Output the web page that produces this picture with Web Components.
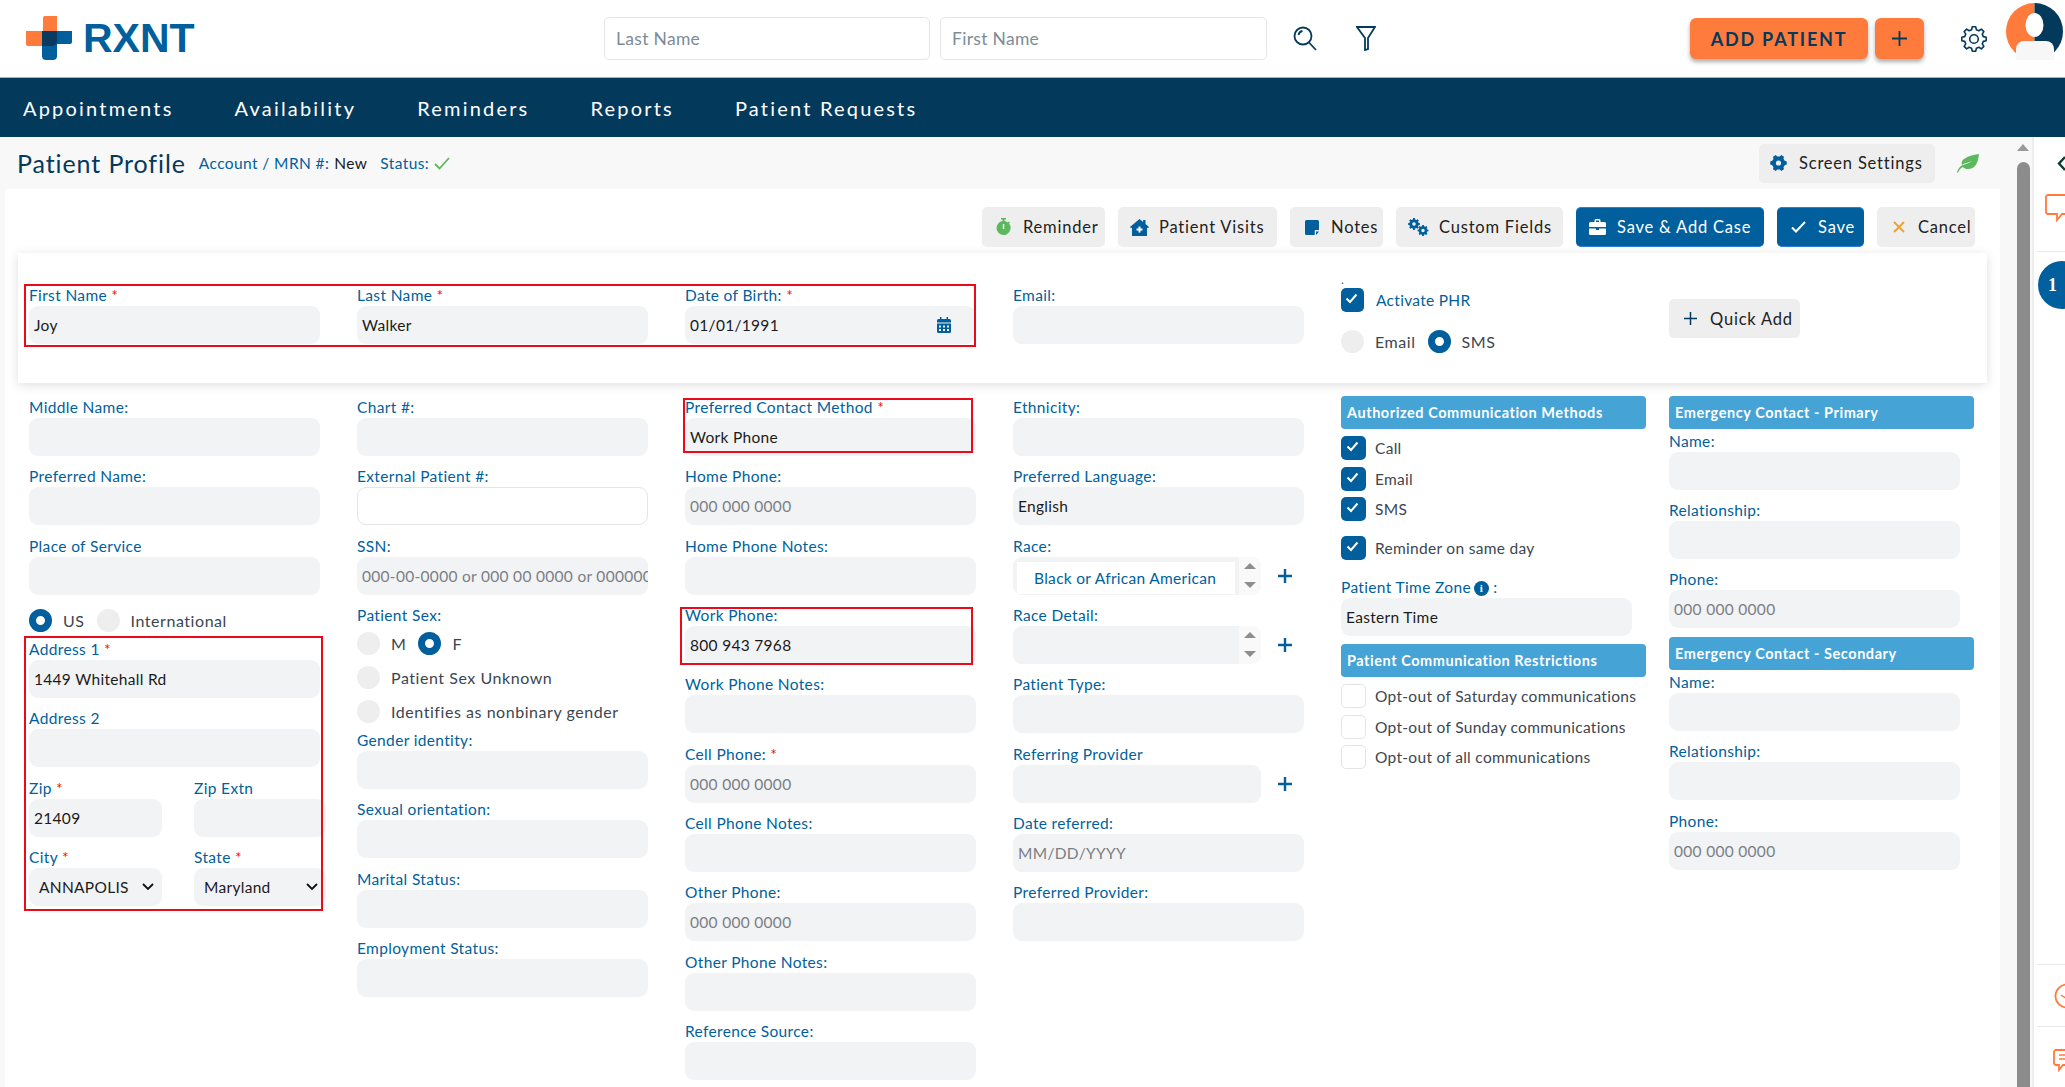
<!DOCTYPE html>
<html lang="en">
<head>
<meta charset="utf-8">
<title>Patient Profile</title>
<style>
  html, body { margin: 0; height: 100%; overflow: hidden; background: #fff; }
  body { font-family: Lato, "Open Sans", sans-serif; font-size: 15.5px; letter-spacing: .35px; }
  .frame { display: flex; flex-direction: column; height: 1087px; }
  .work { display: flex; flex: 1; min-height: 0; }
  .col { display: flex; flex-direction: column; }
  .pt { padding-top: 1px; }
  .two { display: flex; gap: 32px; }
  .radios { display: flex; align-items: center; gap: 12px; height: 23px; }
</style>
</head>
<body>
<div class="frame">
  <rx-header></rx-header>
  <rx-nav>
    <a>Appointments</a><a>Availability</a><a>Reminders</a><a>Reports</a><a>Patient Requests</a>
  </rx-nav>
  <div class="work">
    <rx-main>
      <rx-subbar slot="top"></rx-subbar>
      <rx-btn slot="tools" w="123" icon="watch">Reminder</rx-btn>
      <rx-btn slot="tools" w="159" icon="house">Patient Visits</rx-btn>
      <rx-btn slot="tools" w="93" icon="note">Notes</rx-btn>
      <rx-btn slot="tools" w="167" icon="cogs">Custom Fields</rx-btn>
      <rx-btn slot="tools" w="188" icon="case" primary>Save &amp; Add Case</rx-btn>
      <rx-btn slot="tools" w="87" icon="check" primary>Save</rx-btn>
      <rx-btn slot="tools" w="98" icon="x">Cancel</rx-btn>

      <rx-field slot="card" label="First Name" req>Joy</rx-field>
      <rx-field slot="card" label="Last Name" req>Walker</rx-field>
      <rx-field slot="card" label="Date of Birth:" req>01/01/1991<rx-icon slot="end" name="cal"></rx-icon></rx-field>
      <rx-field slot="card" label="Email:"></rx-field>
      <div slot="card" class="col" style="margin-top:-10px">
        <div style="height:13px;line-height:9px;color:#005f9c;font-size:12px">.</div>
        <rx-check checked accent>Activate PHR</rx-check>
        <div class="radios" style="margin-top:18px">
          <rx-radio>Email</rx-radio><rx-radio checked>SMS</rx-radio>
        </div>
      </div>
      <div slot="card" style="padding-top:14px"><rx-btn w="131" icon="plus" tall>Quick Add</rx-btn></div>

      <div slot="form" class="col pt">
        <rx-field label="Middle Name:"></rx-field>
        <rx-field label="Preferred Name:"></rx-field>
        <rx-field label="Place of Service"></rx-field>
        <div class="radios" style="margin:4px 0 7px">
          <rx-radio checked>US</rx-radio><rx-radio>International</rx-radio>
        </div>
        <rx-field label="Address 1" req>1449 Whitehall Rd</rx-field>
        <rx-field label="Address 2"></rx-field>
        <div class="two">
          <rx-field label="Zip" req w="133">21409</rx-field>
          <rx-field label="Zip Extn" w="132"></rx-field>
        </div>
        <div class="two">
          <rx-field label="City" req w="133" select>ANNAPOLIS</rx-field>
          <rx-field label="State" req w="132" select>Maryland</rx-field>
        </div>
      </div>

      <div slot="form" class="col pt">
        <rx-field label="Chart #:"></rx-field>
        <rx-field label="External Patient #:" white></rx-field>
        <rx-field label="SSN:" ph>000-00-0000 or 000 00 0000 or 000000</rx-field>
        <rx-field label="Patient Sex:" bare></rx-field>
        <div class="radios" style="margin-top:6px">
          <rx-radio>M</rx-radio><rx-radio checked>F</rx-radio>
        </div>
        <rx-radio style="margin-top:11px">Patient Sex Unknown</rx-radio>
        <rx-radio style="margin-top:11px">Identifies as nonbinary gender</rx-radio>
        <rx-field label="Gender identity:" style="margin-top:7px"></rx-field>
        <rx-field label="Sexual orientation:"></rx-field>
        <rx-field label="Marital Status:"></rx-field>
        <rx-field label="Employment Status:"></rx-field>
      </div>

      <div slot="form" class="col pt">
        <rx-field label="Preferred Contact Method" req>Work Phone</rx-field>
        <rx-field label="Home Phone:" ph>000 000 0000</rx-field>
        <rx-field label="Home Phone Notes:"></rx-field>
        <rx-field label="Work Phone:">800 943 7968</rx-field>
        <rx-field label="Work Phone Notes:"></rx-field>
        <rx-field label="Cell Phone:" req ph>000 000 0000</rx-field>
        <rx-field label="Cell Phone Notes:"></rx-field>
        <rx-field label="Other Phone:" ph>000 000 0000</rx-field>
        <rx-field label="Other Phone Notes:"></rx-field>
        <rx-field label="Reference Source:"></rx-field>
      </div>

      <div slot="form" class="col pt">
        <rx-field label="Ethnicity:"></rx-field>
        <rx-field label="Preferred Language:">English</rx-field>
        <rx-field label="Race:" w="248" list="Black or African American"><rx-icon slot="after" name="add"></rx-icon></rx-field>
        <rx-field label="Race Detail:" w="248" list=""><rx-icon slot="after" name="add"></rx-icon></rx-field>
        <rx-field label="Patient Type:"></rx-field>
        <rx-field label="Referring Provider" w="248"><rx-icon slot="after" name="add"></rx-icon></rx-field>
        <rx-field label="Date referred:" ph>MM/DD/YYYY</rx-field>
        <rx-field label="Preferred Provider:"></rx-field>
      </div>

      <div slot="form" class="col">
        <rx-head>Authorized Communication Methods</rx-head>
        <rx-check checked style="margin-top:7px">Call</rx-check>
        <rx-check checked style="margin-top:6.5px">Email</rx-check>
        <rx-check checked style="margin-top:6.5px">SMS</rx-check>
        <rx-check checked style="margin-top:15px">Reminder on same day</rx-check>
        <rx-field label="Patient Time Zone" info style="margin-top:17px">Eastern Time</rx-field>
        <rx-head style="margin-top:-2px">Patient Communication Restrictions</rx-head>
        <rx-check style="margin-top:7px">Opt-out of Saturday communications</rx-check>
        <rx-check style="margin-top:6.5px">Opt-out of Sunday communications</rx-check>
        <rx-check style="margin-top:6.5px">Opt-out of all communications</rx-check>
      </div>

      <div slot="form" class="col">
        <rx-head>Emergency Contact - Primary</rx-head>
        <rx-field label="Name:" style="margin-top:1.5px"></rx-field>
        <rx-field label="Relationship:"></rx-field>
        <rx-field label="Phone:" ph>000 000 0000</rx-field>
        <rx-head style="margin-top:-1.5px">Emergency Contact - Secondary</rx-head>
        <rx-field label="Name:" style="margin-top:2px"></rx-field>
        <rx-field label="Relationship:"></rx-field>
        <rx-field label="Phone:" ph>000 000 0000</rx-field>
      </div>

      <rx-mark slot="marks" style="left:24px;top:284px;width:952px;height:63px"></rx-mark>
      <rx-mark slot="marks" style="left:683px;top:398px;width:290px;height:55px"></rx-mark>
      <rx-mark slot="marks" style="left:680px;top:607px;width:293px;height:58px"></rx-mark>
      <rx-mark slot="marks" style="left:24px;top:636px;width:299px;height:275px"></rx-mark>
    </rx-main>
    <rx-scrollbar></rx-scrollbar>
    <rx-side></rx-side>
  </div>
</div>

<script>
const BLUE = '#005f9c';
const NAVY = '#033a5c';

// outline gear, built from the tooth count so it stays even
function gearPath(cx, cy, r1, r2, teeth) {
  let d = '';
  const step = Math.PI * 2 / teeth;
  for (let i = 0; i < teeth; i++) {
    const a = i * step;
    const pts = [[r1, a - step * .32], [r2, a - step * .18], [r2, a + step * .18], [r1, a + step * .32]];
    pts.forEach((p, n) => {
      const x = (cx + p[0] * Math.cos(p[1])).toFixed(2);
      const y = (cy + p[0] * Math.sin(p[1])).toFixed(2);
      d += (i === 0 && n === 0 ? 'M' : 'L') + x + ' ' + y + ' ';
    });
  }
  return d + 'Z';
}

const ICONS = {
  watch: `<svg width="15" height="18" viewBox="0 0 15 18"><path d="M5 0h5v1.6H8.5v1.5a7 7 0 0 1 3.4 1.4l1-1 1.1 1.1-1 1A7 7 0 1 1 6.5 3.1V1.6H5z" fill="#5cb85c"/><rect x="6.8" y="6" width="1.4" height="5" fill="#fff"/></svg>`,
  house: `<svg width="19" height="17" viewBox="0 0 19 17"><path d="M9.5 0l3.6 3V1h2.4v4l3.5 3-1 1.2-1-.8V17H2V8.400l-1 .8L0 8z" fill="${BLUE}"/><path d="M8.500 7.500h2v2h2v2h-2v2h-2v-2h-2v-2h2z" fill="#fff"/></svg>`,
  note: `<svg width="14" height="15" viewBox="0 0 14 15"><path d="M1.500 0h11A1.500 1.500 0 0 1 14 1.500V10h-3.500A.8.8 0 0 0 9.700 10.800V15H1.500A1.500 1.500 0 0 1 0 13.500v-12A1.500 1.500 0 0 1 1.500 0zM11 11.500h3L11 15z" fill="${BLUE}"/></svg>`,
  cogs: `<svg width="21" height="18" viewBox="0 0 21 18"><path d="${gearPath(6, 6, 4.6, 6, 8)}" fill="${BLUE}"/><circle cx="6" cy="6" r="1.800" fill="#eee"/><path d="${gearPath(15, 12.5, 4.300, 5.500, 8)}" fill="${BLUE}"/><circle cx="15" cy="12.500" r="1.700" fill="#eee"/></svg>`,
  case: `<svg width="17" height="16" viewBox="0 0 17 16"><path d="M5.500 3V1.500A1.500 1.500 0 0 1 7 0h3a1.500 1.500 0 0 1 1.500 1.500V3h4A1.500 1.500 0 0 1 17 4.500V8H0V4.500A1.500 1.500 0 0 1 1.500 3zM7 1.500V3h3V1.500z" fill="#fff"/><path d="M0 9.500h7V11h3V9.500h7v5A1.500 1.500 0 0 1 15.500 16h-14A1.500 1.500 0 0 1 0 14.500z" fill="#fff"/></svg>`,
  check: `<svg width="15" height="12" viewBox="0 0 15 12"><path d="M1 6.500l4 4L14 1" fill="none" stroke="#fff" stroke-width="2"/></svg>`,
  x: `<svg width="12" height="12" viewBox="0 0 12 12"><path d="M1 1l10 10M11 1L1 11" stroke="#f0a030" stroke-width="1.800"/></svg>`,
  plus: `<svg width="13" height="13" viewBox="0 0 13 13"><path d="M6.500 0v13M0 6.500h13" stroke="${NAVY}" stroke-width="1.500"/></svg>`,
  add: `<svg width="16" height="16" viewBox="0 0 16 16"><path d="M8 1v14M1 8h14" stroke="${BLUE}" stroke-width="2.400"/></svg>`,
  cal: `<svg width="14" height="16" viewBox="0 0 14 16"><path d="M3 0h1.500v2h5V0H11v2h1.500A1.500 1.500 0 0 1 14 3.500V5.500H0v-2A1.500 1.500 0 0 1 1.500 2H3z" fill="${BLUE}"/><path d="M0 6.500h14v8a1.500 1.500 0 0 1-1.500 1.500h-11A1.500 1.500 0 0 1 0 14.500z" fill="${BLUE}"/><path d="M2 8.500h2v2H2zM6 8.500h2v2H6zM10 8.500h2v2h-2zM2 12h2v2H2zM6 12h2v2H6zM10 12h2v2h-2z" fill="#f2f3f5"/></svg>`
};

class RxIcon extends HTMLElement {
  connectedCallback() {
    this.attachShadow({ mode: 'open' });
    this.shadowRoot.innerHTML = `<style>:host{display:inline-flex;align-items:center;justify-content:center}</style>${ICONS[this.getAttribute('name')] || ''}`;
  }
}

class RxHeader extends HTMLElement {
  connectedCallback() {
    this.attachShadow({ mode: 'open' });
    this.shadowRoot.innerHTML = `
      <style>
        :host { display: flex; align-items: center; height: 77px; background: #fff; border-bottom: 1px solid #9fb2bf; padding-left: 26px; box-sizing: content-box; font-family: Lato, sans-serif; }
        .logo { display: flex; align-items: center; width: 578px; }
        .word { font: bold 41px/1 "Liberation Sans", sans-serif; color: ${BLUE}; margin-left: 11px; letter-spacing: 0; }
        .q { box-sizing: border-box; height: 43px; border: 1px solid #e3e6e8; border-radius: 5px; padding: 0 11px; display: flex; align-items: center; font-size: 17.5px; color: #7d8c98; letter-spacing: .3px; }
        .add, .more { height: 41px; background: #ff7b3c; color: ${NAVY}; border-radius: 6px; box-shadow: 0 3px 4px rgba(0,0,0,.32); display: flex; align-items: center; justify-content: center; }
        .add { width: 178px; font-size: 18px; font-weight: 700; letter-spacing: 1.800px; margin-left: 314px; }
        .more { width: 49px; margin-left: 7px; }
      </style>
      <div class="logo">
        <svg width="46" height="46" viewBox="0 0 46 46">
          <path d="M17 2a2 2 0 0 1 2-2h12v30H2a2 2 0 0 1-2-2V15h17z" transform="translate(0 0)" fill="#ff7b3c"/>
          <path d="M16 17h30v11a2 2 0 0 1-2 2H31v12a4 4 0 0 1-4 4H20a4 4 0 0 1-4-4z" transform="translate(0 -2)" fill="${BLUE}"/>
          <path d="M16 15h15v10a5 5 0 0 1-5 5H16z" fill="#0a3a60"/>
        </svg>
        <span class="word">RXNT</span>
      </div>
      <div class="q" style="width:326px">Last Name</div>
      <div class="q" style="width:327px;margin-left:10px">First Name</div>
      <svg style="margin-left:26px" width="24" height="25" viewBox="0 0 24 25" fill="none" stroke="${NAVY}" stroke-width="1.800"><circle cx="10" cy="10" r="8.500"/><path d="M16 16.500l7 7.500M5.500 9a5 5 0 0 1 4-4"/></svg>
      <svg style="margin-left:39px" width="20" height="25" viewBox="0 0 20 25" fill="none" stroke="${NAVY}" stroke-width="1.800"><path d="M1 1h18l-7 11v11l-3 1V12z"/></svg>
      <div class="add">ADD PATIENT</div>
      <div class="more"><svg width="15" height="15" viewBox="0 0 15 15"><path d="M7.500 0v15M0 7.500h15" stroke="${NAVY}" stroke-width="1.800"/></svg></div>
      <svg style="margin-left:37px" width="26" height="26" viewBox="0 0 26 26" fill="none" stroke="${NAVY}" stroke-width="1.600"><path d="${gearPath(13, 13, 9.600, 12.300, 8)}" stroke-linejoin="round"/><circle cx="13" cy="13" r="4.300"/></svg>
      <svg style="margin-left:19px;margin-top:-14px" width="57" height="57" viewBox="0 0 57 57">
        <path d="M28.500 0a28.500 28.500 0 0 0 0 57z" fill="#ff7b3c"/>
        <path d="M28.500 0a28.500 28.500 0 0 1 0 57z" fill="${NAVY}"/>
        <ellipse cx="28.500" cy="22" rx="9" ry="12" fill="#fff"/>
        <path d="M10 57V46a8 8 0 0 1 8-8h22a8 8 0 0 1 8 8v11z" fill="#f7f7f7"/>
      </svg>`;
  }
}

class RxNav extends HTMLElement {
  connectedCallback() {
    this.attachShadow({ mode: 'open' });
    this.shadowRoot.innerHTML = `
      <style>
        :host { display: flex; align-items: center; gap: 61px; height: 59px; padding-left: 23px; background: ${NAVY}; color: #fff; font: 20px Lato, sans-serif; letter-spacing: 2.200px; }
        ::slotted(a) { color: #fff; }
      </style>
      <slot></slot>`;
  }
}

class RxSubbar extends HTMLElement {
  connectedCallback() {
    this.attachShadow({ mode: 'open' });
    this.shadowRoot.innerHTML = `
      <style>
        :host { display: flex; align-items: center; height: 52px; padding: 0 36px 0 17px; margin-left: -5px; background: #f8f8f8; font-family: Lato, sans-serif; }
        h1 { margin: 0 13px 0 0; font-size: 25px; font-weight: 400; letter-spacing: .9px; color: ${NAVY}; }
        .i { color: ${BLUE}; font-size: 15.500px; letter-spacing: .4px; }
        .v { color: #1b1b1b; margin: 0 13px 0 5px; font-size: 15.500px; letter-spacing: .4px; }
        .sp { flex: 1; }
        .set { box-sizing: border-box; width: 176px; height: 39px; background: #eee; border-radius: 5px; display: flex; align-items: center; gap: 12px; padding-left: 11px; color: #222; font-size: 16.500px; letter-spacing: .8px; }
      </style>
      <h1>Patient Profile</h1>
      <span class="i">Account / MRN #:</span><span class="v">New</span>
      <span class="i">Status:</span>
      <svg style="margin-left:5px" width="16" height="13" viewBox="0 0 16 13"><path d="M1 7l4.500 4.500L15 1" fill="none" stroke="#5cb85c" stroke-width="1.800"/></svg>
      <div class="sp"></div>
      <div class="set"><svg width="17" height="18" viewBox="0 0 17 18"><path d="${gearPath(8.500, 9, 6.600, 8.400, 6)}" fill="${BLUE}"/><circle cx="8.500" cy="9" r="2.600" fill="#eee"/></svg>Screen Settings</div>
      <svg style="margin-left:22px" width="22" height="19" viewBox="0 0 22 19"><path d="M22 0c-1 9-4 15-11 15-2 0-4-.6-5-2C3.500 14 2 16 1 19L0 18c1-3 3-6 6-7 2-1 5-1 9-4-4 2-8 2-10 4C3 6 9 2 22 0z" fill="#5cb85c"/></svg>`;
  }
}

class RxBtn extends HTMLElement {
  connectedCallback() {
    const prim = this.hasAttribute('primary');
    const tall = this.hasAttribute('tall');
    this.attachShadow({ mode: 'open' });
    this.shadowRoot.innerHTML = `
      <style>
        :host { display: flex; flex: none; box-sizing: border-box; width: ${this.getAttribute('w')}px; height: ${tall ? 39 : 40}px; align-items: center; gap: 10px; padding-left: 12px; border-radius: 5px; background: ${prim ? BLUE : '#eee'}; color: ${prim ? '#fff' : '#222'}; font: 16.500px Lato, sans-serif; letter-spacing: .8px; ${prim ? 'border-top:1px solid #2d7ee0;border-bottom:1px solid #2d7ee0;' : ''} }
        .i { display: flex; min-width: 19px; justify-content: center; }
      </style>
      <span class="i">${ICONS[this.getAttribute('icon')] || ''}</span><span><slot></slot></span>`;
  }
}

class RxField extends HTMLElement {
  connectedCallback() {
    const has = n => this.hasAttribute(n);
    const w = this.getAttribute('w');
    const list = this.getAttribute('list');
    const bare = has('bare');
    const select = has('select');
    this.attachShadow({ mode: 'open' });
    this.shadowRoot.innerHTML = `
      <style>
        :host { display: block; width: ${w ? (w + 'px') : '290.500px'}; margin-bottom: ${bare ? 0 : '10.330px'}; font-family: Lato, sans-serif; }
        .lab { height: 21px; line-height: 20px; color: ${BLUE}; font-size: 15.500px; letter-spacing: .35px; white-space: nowrap; }
        .req { color: #f01010; }
        .row { display: flex; align-items: center; gap: 16px; }
        .box { position: relative; flex: none; box-sizing: border-box; width: 100%; height: 38px; border-radius: 9px; background: ${has('white') ? '#fff' : '#f2f3f5'}; ${has('white') ? 'border:1px solid #e3e5e8;' : ''} display: flex; align-items: center; justify-content: space-between; padding: 0 ${select ? 8 : 5}px 0 ${select ? 10 : 5}px; color: ${has('ph') ? '#7b7f84' : '#1b1b1b'}; font-size: 15.500px; letter-spacing: .3px; white-space: nowrap; overflow: hidden; }
        .info { display: inline-block; vertical-align: 1px; width: 15px; height: 15px; border-radius: 50%; background: ${BLUE}; color: #fff; font: bold 11px/15px "Liberation Serif", serif; text-align: center; margin-left: 3px; }
        .list { position: absolute; left: 4px; top: 5px; bottom: 1px; right: 26px; background: #fff; color: ${BLUE}; padding: 7px 0 0 17px; }
        .spin { position: absolute; right: 0; top: 0; bottom: 0; width: 22px; background: #f9f9f9; display: flex; flex-direction: column; align-items: center; justify-content: space-between; padding: 6px 0 7px; box-sizing: border-box; }
        .up, .dn { width: 0; height: 0; border-left: 6px solid transparent; border-right: 6px solid transparent; }
        .up { border-bottom: 6px solid #8e8e8e; }
        .dn { border-top: 6px solid #8e8e8e; }
        ::slotted([slot=end]) { margin-right: 20px; }
        ::slotted([slot=after]) { margin-left: 0; }
      </style>
      <div class="lab">${this.getAttribute('label') || ''}${has('req') ? ' <span class="req">*</span>' : ''}${has('info') ? '<span class="info">i</span> :' : ''}</div>
      ${bare ? '' : `<div class="row" style="${w && w > 200 ? 'width:290px' : ''}">
        <div class="box" style="${w ? `width:${w}px` : ''}">
          <span><slot></slot></span><slot name="end"></slot>
          ${select ? `<svg width="12" height="8" viewBox="0 0 12 8"><path d="M1 1l5 5 5-5" fill="none" stroke="#111" stroke-width="1.800"/></svg>` : ''}
          ${list !== null ? `${list ? `<div class="list">${list}</div>` : ''}<div class="spin"><span class="up"></span><span class="dn"></span></div>` : ''}
        </div>
        <slot name="after"></slot>
      </div>`}`;
  }
}

class RxCheck extends HTMLElement {
  connectedCallback() {
    const on = this.hasAttribute('checked');
    const accent = this.hasAttribute('accent');
    this.attachShadow({ mode: 'open' });
    this.shadowRoot.innerHTML = `
      <style>
        :host { display: flex; align-items: center; gap: ${accent ? 12 : 9}px; height: 24px; color: ${accent ? BLUE : '#3c4650'}; font: 15.500px Lato, sans-serif; letter-spacing: .3px; white-space: nowrap; }
        .b { box-sizing: border-box; flex: none; width: ${accent ? 23 : 25}px; height: 24px; border-radius: 5px; background: ${on ? BLUE : '#fff'}; border: ${on ? 'none' : '1px solid #e4e4e4'}; display: flex; align-items: center; justify-content: center; }
      </style>
      <span class="b">${on ? `<svg style="margin:-3px 2px 0 0" width="13" height="11" viewBox="0 0 13 11"><path d="M1.500 5.500l3.500 3.500 6.500-7.500" fill="none" stroke="#fff" stroke-width="2"/></svg>` : ''}</span>
      <span><slot></slot></span>`;
  }
}

class RxRadio extends HTMLElement {
  connectedCallback() {
    const on = this.hasAttribute('checked');
    this.attachShadow({ mode: 'open' });
    this.shadowRoot.innerHTML = `
      <style>
        :host { display: flex; align-items: center; gap: 11px; height: 23px; color: #3c4650; font: 16px Lato, sans-serif; letter-spacing: .55px; white-space: nowrap; }
        .c { box-sizing: border-box; flex: none; width: 23px; height: 23px; border-radius: 50%; background: ${on ? '#fff' : '#eee'}; border: ${on ? `7px solid ${BLUE}` : 'none'}; }
      </style>
      <span class="c"></span><span><slot></slot></span>`;
  }
}

class RxHead extends HTMLElement {
  connectedCallback() {
    this.attachShadow({ mode: 'open' });
    this.shadowRoot.innerHTML = `
      <style>
        :host { display: flex; align-items: center; box-sizing: border-box; width: 305px; height: 33px; padding-left: 6px; background: #45a3d6; border-radius: 4px; color: #fff; font: bold 14.500px Lato, sans-serif; letter-spacing: .55px; white-space: nowrap; }
      </style>
      <slot></slot>`;
  }
}

class RxMark extends HTMLElement {
  connectedCallback() {
    this.attachShadow({ mode: 'open' });
    this.shadowRoot.innerHTML = `<style>:host { position: absolute; box-sizing: border-box; border: 2px solid #ea0a1a; pointer-events: none; }</style>`;
  }
}

class RxMain extends HTMLElement {
  connectedCallback() {
    this.attachShadow({ mode: 'open' });
    this.shadowRoot.innerHTML = `
      <style>
        :host { display: block; flex: none; width: 2015px; background: #f8f8f8; overflow: hidden; padding-left: 5px; box-sizing: border-box; }
        .sheet { width: 1995px; height: 949px; background: #fff; overflow: hidden; }
        .tools { display: flex; justify-content: flex-end; gap: 13px; padding: 18px 25px 0 0; }
        .card { box-sizing: border-box; width: 1969px; height: 130px; margin: 6px 0 0 13px; padding: 32px 0 0 11px; background: #fff; box-shadow: 0 2px 10px rgba(0,0,0,.13); }
        .grid { display: grid; grid-template-columns: repeat(6, 328px); align-items: start; }
        .form { margin: 13px 0 0 24px; }
        .marks { position: absolute; left: 0; top: 0; }
      </style>
      <slot name="top"></slot>
      <div class="sheet">
        <div class="tools"><slot name="tools"></slot></div>
        <div class="card"><div class="grid"><slot name="card"></slot></div></div>
        <div class="grid form"><slot name="form"></slot></div>
      </div>
      <div class="marks"><slot name="marks"></slot></div>`;
  }
}

class RxScrollbar extends HTMLElement {
  connectedCallback() {
    this.attachShadow({ mode: 'open' });
    this.shadowRoot.innerHTML = `
      <style>
        :host { display: flex; flex-direction: column; align-items: center; flex: none; width: 17px; padding-right: 1px; padding-top: 7px; box-sizing: border-box; background: #f8f8f8; }
        .a { width: 0; height: 0; border-left: 6px solid transparent; border-right: 6px solid transparent; border-bottom: 7px solid #9a9a9a; }
        .t { width: 13px; flex: 1; margin-top: 11px; background: #8c8c8c; border-radius: 7px 7px 0 0; }
      </style>
      <div class="a"></div><div class="t"></div>`;
  }
}

class RxSide extends HTMLElement {
  connectedCallback() {
    this.attachShadow({ mode: 'open' });
    this.shadowRoot.innerHTML = `
      <style>
        :host { display: flex; flex-direction: column; flex: 1; min-width: 0; background: #fff; border-left: 2px solid #eee; overflow: hidden; }
        .sec { border-bottom: 1px solid #e8e8e8; margin-left: 3px; }
        .one { width: 48px; height: 48px; flex: none; margin: 9px 0 0 4px; border-radius: 50%; background: ${BLUE}; color: #fff; font: bold 18px/48px "Liberation Serif", serif; padding-left: 10px; box-sizing: border-box; }
        .sp { flex: 1; }
      </style>
      <div class="sec" style="height:114px;flex:none">
        <svg style="margin:19px 0 0 20px;display:block" width="10" height="15" viewBox="0 0 10 15"><path d="M8 1L2 7.500 8 14" fill="none" stroke="#0b3d2e" stroke-width="2.400"/></svg>
        <svg style="margin:23px 0 0 8px;display:block" width="34" height="32" viewBox="0 0 34 32"><path d="M3 1h30v19H17l-5 6v-6H3a2 2 0 0 1-2-2V3a2 2 0 0 1 2-2z" fill="none" stroke="#ff7b3c" stroke-width="1.800"/></svg>
      </div>
      <div class="one">1</div>
      <div class="sp"></div>
      <div class="sec" style="border-top:1px solid #e8e8e8;height:61px;flex:none;border-bottom:1px solid #e8e8e8">
        <svg style="margin:18px 0 0 17px;display:block" width="26" height="26" viewBox="0 0 26 26"><circle cx="13" cy="13" r="11.500" fill="none" stroke="#ff7b3c" stroke-width="1.800"/><path d="M7 12l6 4 6-5" fill="none" stroke="#ff7b3c" stroke-width="1.500"/></svg>
      </div>
      <div style="height:60px;flex:none">
        <svg style="margin:22px 0 0 19px;display:block" width="26" height="24" viewBox="0 0 26 24"><path d="M3 1h22v15H10l-4 5v-5H3a2 2 0 0 1-2-2V3a2 2 0 0 1 2-2z" fill="none" stroke="#ff7b3c" stroke-width="1.800"/><path d="M6 6h14M6 10h14" stroke="#ff7b3c" stroke-width="1.500"/></svg>
      </div>`;
  }
}

customElements.define('rx-icon', RxIcon);
customElements.define('rx-header', RxHeader);
customElements.define('rx-nav', RxNav);
customElements.define('rx-subbar', RxSubbar);
customElements.define('rx-btn', RxBtn);
customElements.define('rx-field', RxField);
customElements.define('rx-check', RxCheck);
customElements.define('rx-radio', RxRadio);
customElements.define('rx-head', RxHead);
customElements.define('rx-mark', RxMark);
customElements.define('rx-main', RxMain);
customElements.define('rx-scrollbar', RxScrollbar);
customElements.define('rx-side', RxSide);
</script>
</body>
</html>
